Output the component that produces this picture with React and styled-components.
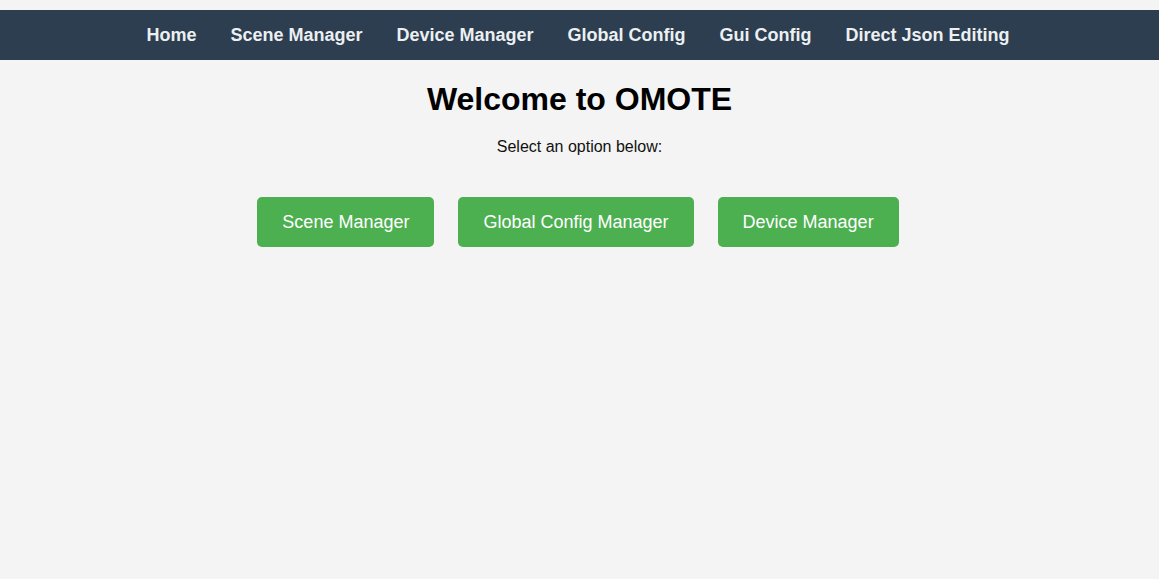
import React from 'react';
import styled, { createGlobalStyle } from 'styled-components';

const GlobalStyle = createGlobalStyle`
  html, body {
    margin: 0;
    padding: 0;
    background: #f4f4f4;
    font-family: "Liberation Sans", Arial, sans-serif;
  }
  body {
    padding-top: 10px;
  }
`;

const navItems = [
  'Home',
  'Scene Manager',
  'Device Manager',
  'Global Config',
  'Gui Config',
  'Direct Json Editing',
];

const options = ['Scene Manager', 'Global Config Manager', 'Device Manager'];

const App = () => (
  <>
    <GlobalStyle />
    <NavBar>
      {navItems.map(item => (
        <NavLink key={item} href="#">
          {item}
        </NavLink>
      ))}
    </NavBar>
    <Main>
      <Title>Welcome to OMOTE</Title>
      <Subtitle>Select an option below:</Subtitle>
      <ButtonRow>
        {options.map(option => (
          <OptionButton key={option}>{option}</OptionButton>
        ))}
      </ButtonRow>
    </Main>
  </>
);

export default App;

const NavBar = styled.nav`
  display: flex;
  justify-content: center;
  align-items: center;
  gap: 34px;
  height: 50px;
  padding-right: 3px;
  background: #2c3e50;
`;

const NavLink = styled.a`
  color: #ecf0f1;
  font-size: 18px;
  font-weight: bold;
  text-decoration: none;
`;

const Main = styled.main`
  display: flex;
  flex-direction: column;
  align-items: center;
  text-align: center;
`;

const Title = styled.h1`
  margin: 21px 0 0;
  font-size: 32px;
  line-height: 37px;
  font-weight: bold;
  color: #000;
`;

const Subtitle = styled.p`
  margin: 20px 0 0;
  font-size: 16px;
  line-height: 18px;
  color: #111;
`;

const ButtonRow = styled.div`
  display: flex;
  gap: 24px;
  margin-top: 41px;
  padding-right: 3px;
`;

const OptionButton = styled.button`
  height: 50px;
  padding: 0 25px;
  border: none;
  border-radius: 5px;
  background: #4caf50;
  color: #fff;
  font-family: "Liberation Sans", Arial, sans-serif;
  font-size: 18px;
  cursor: pointer;
`;
